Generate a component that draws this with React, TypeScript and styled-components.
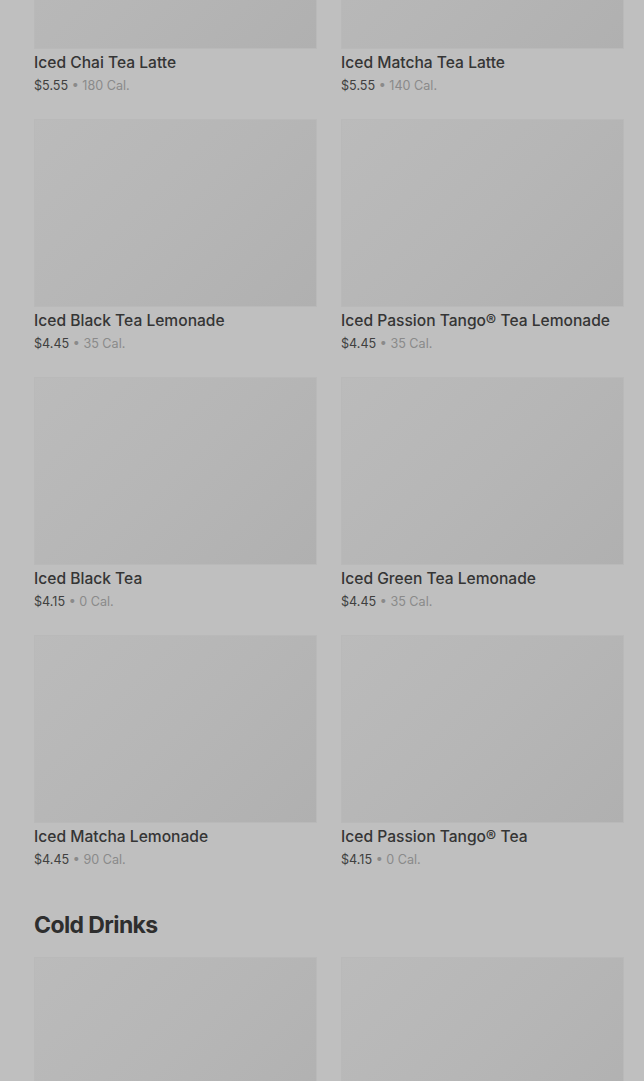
import styled, { createGlobalStyle } from 'styled-components';

const GlobalStyle = createGlobalStyle`
  html, body {
    margin: 0;
    padding: 0;
    background: #bfbfbf;
    font-family: Inter, "Noto Sans", "Liberation Sans", sans-serif;
    overflow: hidden;
  }
`;

const Page = styled.main`
  height: 1081px;
  overflow: hidden;
  background: #bfbfbf;
`;

// list is scrolled: the first row of pictures is cut off at the top
const Scroller = styled.div`
  margin-top: -139px;
  padding: 0 20px 0 34px;
`;

const Section = styled.section`
  padding-bottom: 38px;
`;

const Heading = styled.h2`
  margin: 0 0 15px;
  font-size: 23px;
  line-height: 34px;
  font-weight: 700;
  letter-spacing: -0.6px;
  color: #2e2e2e;
`;

const Grid = styled.div`
  display: grid;
  grid-template-columns: 283px 283px;
  column-gap: 24px;
  row-gap: 23px;
`;

const Card = styled.article`
  display: flex;
  flex-direction: column;
`;

const Thumb = styled.div`
  height: 188px;
  background: linear-gradient(135deg, #bbbbbb 0%, #b6b6b6 50%, #b0b0b0 100%);
  box-shadow: inset 0 0 0 1px #b9b9b9;
`;

const Name = styled.h3`
  margin: 4px 0 0;
  font-size: 15.6px;
  line-height: 20px;
  font-weight: 500;
  color: #353535;
  white-space: nowrap;
`;

const Meta = styled.p`
  margin: 3px 0 0;
  font-size: 12.6px;
  line-height: 20px;
  color: #8a8a8a;
`;

const Price = styled.span`
  color: #404040;
`;

type Drink = { name: string; price: string; cal: number };

const teas: Drink[] = [
  { name: 'Iced Chai Tea Latte', price: '$5.55', cal: 180 },
  { name: 'Iced Matcha Tea Latte', price: '$5.55', cal: 140 },
  { name: 'Iced Black Tea Lemonade', price: '$4.45', cal: 35 },
  { name: 'Iced Passion Tango® Tea Lemonade', price: '$4.45', cal: 35 },
  { name: 'Iced Black Tea', price: '$4.15', cal: 0 },
  { name: 'Iced Green Tea Lemonade', price: '$4.45', cal: 35 },
  { name: 'Iced Matcha Lemonade', price: '$4.45', cal: 90 },
  { name: 'Iced Passion Tango® Tea', price: '$4.15', cal: 0 },
];

function DrinkCard({ drink }: { drink: Drink }) {
  return (
    <Card>
      <Thumb />
      <Name>{drink.name}</Name>
      <Meta>
        <Price>{drink.price}</Price> • {drink.cal} Cal.
      </Meta>
    </Card>
  );
}

export default function App() {
  return (
    <Page>
      <GlobalStyle />
      <Scroller>
        <Section>
          <Grid>
            {teas.map((d) => (
              <DrinkCard key={d.name} drink={d} />
            ))}
          </Grid>
        </Section>
        <Section>
          <Heading>Cold Drinks</Heading>
          <Grid>
            <Card>
              <Thumb />
            </Card>
            <Card>
              <Thumb />
            </Card>
          </Grid>
        </Section>
      </Scroller>
    </Page>
  );
}
